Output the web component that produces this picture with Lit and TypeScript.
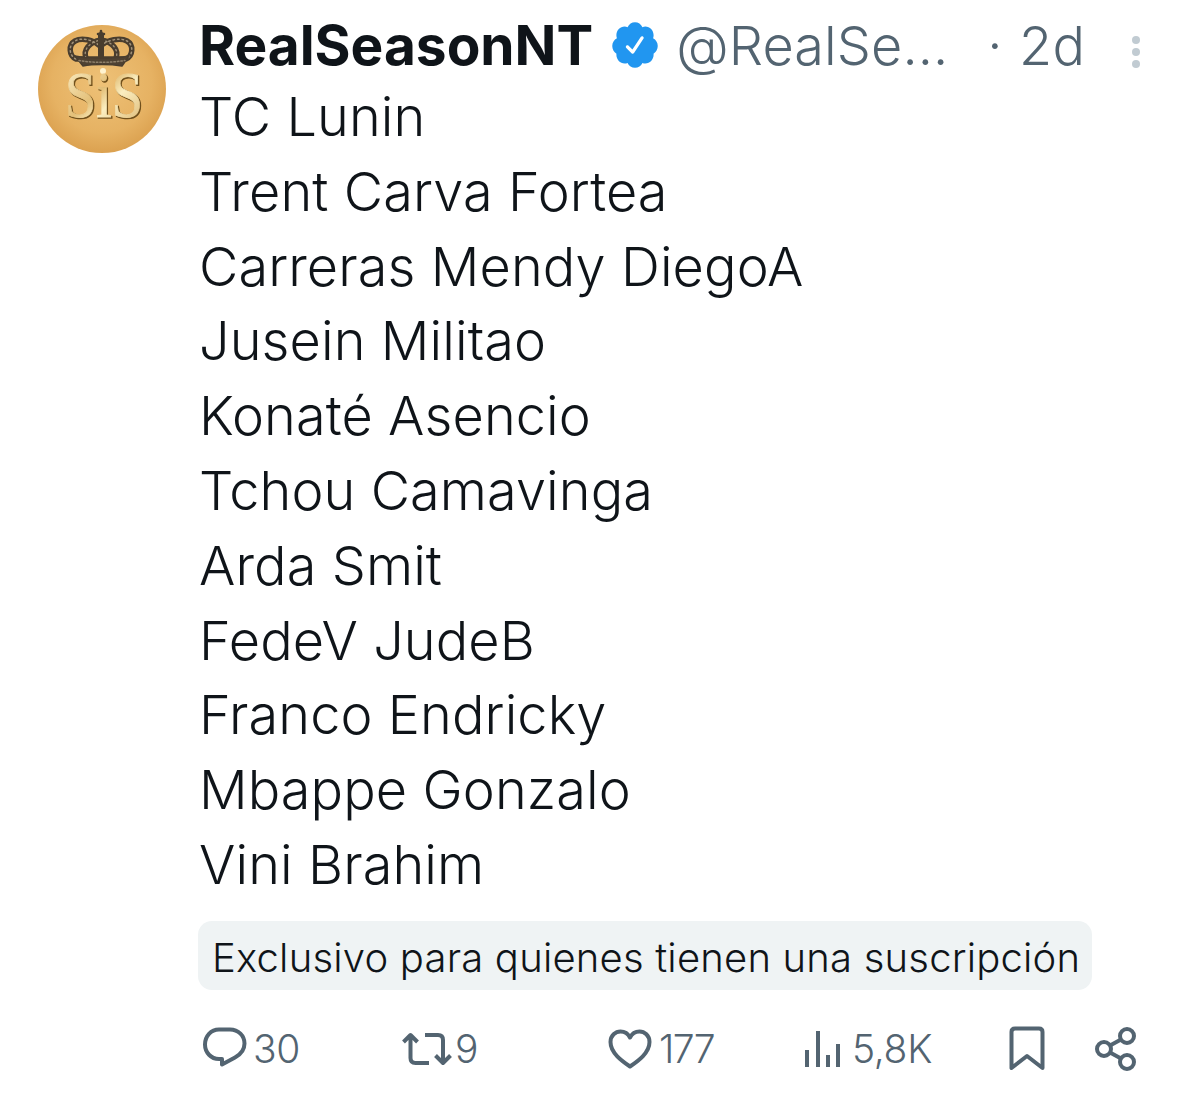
import { LitElement, html, css, svg } from "lit";
import { customElement } from "lit/decorators.js";

const lines = [
  "TC Lunin",
  "Trent Carva Fortea",
  "Carreras Mendy DiegoA",
  "Jusein Militao",
  "Konaté Asencio",
  "Tchou Camavinga",
  "Arda Smit",
  "FedeV JudeB",
  "Franco Endricky",
  "Mbappe Gonzalo",
  "Vini Brahim",
];

const avatar = svg`
<svg class="avatar" viewBox="0 0 128 128" width="128" height="128">
  <defs>
    <radialGradient id="gold" cx="50%" cy="45%" r="60%">
      <stop offset="0%" stop-color="#eec177"/>
      <stop offset="65%" stop-color="#e6b263"/>
      <stop offset="100%" stop-color="#d89c4a"/>
    </radialGradient>
    <linearGradient id="letter" x1="0" y1="0" x2="1" y2="1">
      <stop offset="0%" stop-color="#fff6d2"/>
      <stop offset="45%" stop-color="#e3bf78"/>
      <stop offset="60%" stop-color="#fbeec0"/>
      <stop offset="100%" stop-color="#d8b068"/>
    </linearGradient>
    <filter id="soft" x="-10%" y="-10%" width="120%" height="120%"><feGaussianBlur stdDeviation="0.5"/></filter>
  </defs>
  <circle cx="64" cy="64" r="64" fill="url(#gold)"/>
  <g filter="url(#soft)" fill="none" stroke-linecap="round" stroke-linejoin="round">
    <path d="M38 34 C31 31 30 20 37 16 C44 12 55 15 62 21 C70 15 82 12 89 16 C96 20 95 31 88 34 Z" stroke="#4a3e2f" stroke-width="5.5"/>
    <path d="M48 33 C45 25 51 17 63 15 C75 17 81 25 78 33" stroke="#4a3e2f" stroke-width="5.5"/>
    <path d="M38 34 C31 31 30 20 37 16 C44 12 55 15 62 21 C70 15 82 12 89 16 C96 20 95 31 88 34" stroke="#a3937a" stroke-width="1.5" stroke-dasharray="1.5 3"/>
    <path d="M48 33 C45 25 51 17 63 15 C75 17 81 25 78 33" stroke="#a3937a" stroke-width="1.3" stroke-dasharray="1.5 3"/>
    <path d="M63 10 V34" stroke="#4a3e2f" stroke-width="6"/>
    <path d="M63 6 V12 M60 9 H66" stroke="#4a3e2f" stroke-width="2.6"/>
    <path d="M37 31 C52 34 75 34 91 31 L84 41 C72 39 55 39 45 41 Z" fill="#4f4233" stroke="#4a3e2f" stroke-width="1.5"/>
    <path d="M41 35.5 C55 38 72 38 87 35.5" stroke="#8f806a" stroke-width="1.5" stroke-dasharray="1.5 2"/>
  </g>
  <circle cx="65" cy="46" r="3" fill="#fff3d0"/>
  <text class="sis" x="67" y="92.8" text-anchor="middle" textLength="78" lengthAdjust="spacingAndGlyphs" fill="#70501c" stroke="#70501c" stroke-width="1.6">SiS</text>
  <text class="sis" x="66" y="92" text-anchor="middle" textLength="78" lengthAdjust="spacingAndGlyphs" fill="url(#letter)" stroke="url(#letter)" stroke-width="0.8">SiS</text>
</svg>`;

const badge = svg`
<svg class="badge" viewBox="0 0 24 24" width="52" height="52">
  <circle cx="12" cy="12" r="7" fill="#fff"/>
  <path fill="#2196f0" d="M22.5 12.5c0-1.58-.875-2.95-2.148-3.6.154-.435.238-.905.238-1.4 0-2.21-1.71-3.998-3.818-3.998-.47 0-.92.084-1.336.25C14.818 2.415 13.51 1.5 12 1.5s-2.816.917-3.437 2.25c-.415-.165-.866-.25-1.336-.25-2.11 0-3.818 1.79-3.818 4 0 .494.083.964.237 1.4-1.272.65-2.147 2.018-2.147 3.6 0 1.495.782 2.798 1.942 3.486-.02.17-.032.34-.032.514 0 2.21 1.708 4 3.818 4 .47 0 .92-.086 1.335-.25.62 1.334 1.926 2.25 3.437 2.25 1.512 0 2.818-.916 3.437-2.25.415.163.865.248 1.336.248 2.11 0 3.818-1.79 3.818-4 0-.174-.012-.344-.033-.513 1.158-.687 1.943-1.99 1.943-3.484zm-6.616-3.334l-4.334 6.5c-.145.217-.382.334-.625.334-.143 0-.288-.04-.416-.126l-.115-.094-2.415-2.415c-.293-.293-.293-.768 0-1.06s.768-.294 1.06 0l1.77 1.767 3.825-5.74c.23-.345.696-.436 1.04-.207.346.23.44.696.21 1.04z"/>
</svg>`;

const comment = svg`
<svg class="ico" width="44" height="44" viewBox="0 0 44 44">
  <path d="M16 2.5 H27 C35.5 2.5 41.5 9 41.5 16.5 C41.5 23 37.5 27.5 32 30.5 L19 37.5 V32 H16 C8 32 2 25.5 2 17.5 C2 9 8 2.5 16 2.5 Z"/>
</svg>`;
const retweet = svg`
<svg class="ico" width="50" height="34" viewBox="0 0 50 34">
  <path d="M1.5 10 L8.5 3 L15.5 10 M8.5 3 V26 Q8.5 31 13.5 31 H27 M23 3 H36 Q41 3 41 8 V31 M33.5 23.5 L41 31 L48.5 23.5"/>
</svg>`;
const heart = svg`
<svg class="ico" width="44" height="40" viewBox="0 0 44 40">
  <path d="M22 37.5 C14 32 2.5 24 2.5 13 C2.5 6.5 7.5 2.5 12.5 2.5 C16.5 2.5 20 4.5 22 8.5 C24 4.5 27.5 2.5 31.5 2.5 C36.5 2.5 41.5 6.5 41.5 13 C41.5 24 30 32 22 37.5 Z"/>
</svg>`;
const views = svg`
<svg class="ico" width="36" height="38" viewBox="0 0 36 38">
  <path d="M2 20 V37 M13 1 V37 M23 25 V37 M33 14 V37"/>
</svg>`;
const bookmark = svg`
<svg class="ico" width="36" height="46" viewBox="0 0 36 46">
  <path d="M2.5 6 Q2.5 2.5 6 2.5 H30 Q33.5 2.5 33.5 6 V42 L18 30 L2.5 42 Z"/>
</svg>`;
const share = svg`
<svg class="ico" width="42" height="46" viewBox="0 0 42 46">
  <circle cx="9" cy="23" r="7"/><circle cx="32" cy="10" r="7"/><circle cx="32" cy="36" r="7"/>
  <path d="M15 19.5 L26 13.5 M15 26.5 L26 32.5"/>
</svg>`;

@customElement("app-root")
export class AppRoot extends LitElement {
  static styles = css`
    :host {
      display: block;
      width: 1200px;
      height: 1095px;
      background: #fff;
      overflow: hidden;
      font-family: Inter, "Liberation Sans", sans-serif;
      color: #0f1419;
    }
    .tweet {
      display: flex;
      gap: 33px;
      padding: 25px 0 0 38px;
    }
    .avatar { flex: none; display: block; }
    .sis { font-family: "Liberation Serif", serif; font-size: 66px; font-weight: 400; }
    .body { flex: 1; min-width: 0; margin-top: -2px; }
    .head {
      display: flex;
      align-items: center;
      height: 44px;
      white-space: nowrap;
    }
    .name { font-size: 55px; font-weight: 700; letter-spacing: 0; }
    .badge { margin-left: 16px; flex: none; }
    .handle, .time { font-size: 54px; font-weight: 350; color: #536471; }
    .handle { margin-left: 15px; width: 311px; letter-spacing: 0.1px; }
    .time { word-spacing: 1px; letter-spacing: 0.2px; }
    .dots { display: flex; flex-direction: column; gap: 4px; margin: 14px 0 0 47px; }
    .dots i { display: block; width: 8px; height: 8px; border-radius: 50%; background: #c1cbd2; }
    .text { margin-top: 13px; font-size: 54px; font-weight: 350; line-height: 74.8px; }
    .text div { white-space: nowrap; letter-spacing: 0.1px; }
    .pill {
      margin-top: 18px;
      width: 894px;
      height: 69px;
      margin-left: -1px;
      box-sizing: border-box;
      padding: 5px 0 0 14px;
      display: flex;
      align-items: center;
      border-radius: 14px;
      background: #eff3f4;
      font-size: 40px;
      font-weight: 350;
      letter-spacing: 0.2px;
      white-space: nowrap;
    }
    .actions {
      display: flex;
      align-items: center;
      height: 46px;
      margin-top: 36px;
      margin-left: 4px;
      color: #536471;
      font-size: 39px;
      font-weight: 350;
    }
    .act { display: flex; align-items: center; flex: none; }
    .act span { letter-spacing: -0.3px; }
    .act .tight { letter-spacing: -1.6px; }
    .c1 { width: 199px; gap: 6px; }
    .c2 { width: 206px; gap: 3px; }
    .c3 { width: 197px; gap: 7px; }
    .c4 { width: 204px; gap: 11px; }
    .c5 { width: 86px; }
    .ico { display: block; flex: none; fill: none; stroke: #536471; stroke-width: 4; stroke-linejoin: round; }
  `;

  render() {
    return html`
      <div class="tweet">
        ${avatar}
        <div class="body">
          <div class="head">
            <span class="name">RealSeasonNT</span>
            ${badge}
            <span class="handle">@RealSe...</span>
            <span class="time">· 2d</span>
            <div class="dots"><i></i><i></i><i></i></div>
          </div>
          <div class="text">${lines.map((l) => html`<div>${l}</div>`)}</div>
          <div class="pill">Exclusivo para quienes tienen una suscripción</div>
          <div class="actions">
            <div class="act c1">${comment}<span>30</span></div>
            <div class="act c2">${retweet}<span>9</span></div>
            <div class="act c3">${heart}<span class="tight">177</span></div>
            <div class="act c4">${views}<span>5,8K</span></div>
            <div class="act c5">${bookmark}</div>
            <div class="act c6">${share}</div>
          </div>
        </div>
      </div>
    `;
  }
}
